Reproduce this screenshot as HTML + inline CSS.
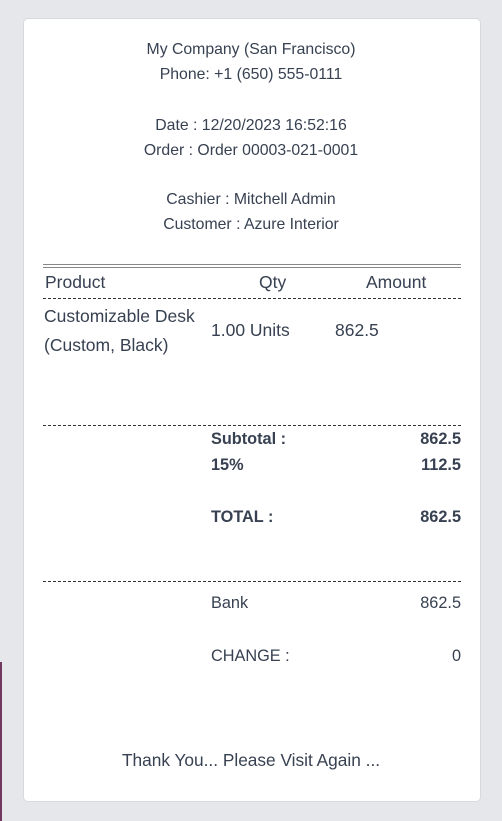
<!DOCTYPE html>
<html><head><style>
body{margin:0;width:502px;height:821px;background:#e6e7eb;position:relative;overflow:hidden;font-family:"Liberation Sans",sans-serif;color:#374151}
.card{position:absolute;left:23px;top:18px;width:456px;height:782px;background:#fff;border:1px solid #d8d9dd;border-radius:5px}
.strip{position:absolute;left:0;top:662px;width:2px;height:159px;background:#71395f}
.t{position:absolute;white-space:nowrap;line-height:1}
.c{left:0;width:502px;text-align:center;font-size:15.8px}
.s{font-size:17.5px}
.b{font-weight:bold;font-size:16.3px}
.r{text-align:right}
.dash{position:absolute;left:43px;width:418px;border-top:1px dashed #333}
</style></head><body>
<div class="strip"></div>
<div class="card"></div>
<div class="t c" style="top:42px">My Company (San Francisco)</div>
<div class="t c" style="top:67px">Phone: +1 (650) 555-0111</div>
<div class="t c" style="top:118px">Date : 12/20/2023 16:52:16</div>
<div class="t c" style="top:143px">Order : Order 00003-021-0001</div>
<div class="t c" style="top:192px">Cashier : Mitchell Admin</div>
<div class="t c" style="top:217px">Customer : Azure Interior</div>
<div style="position:absolute;left:43px;top:264px;width:418px;height:2px;border-top:1px solid #888;border-bottom:1px solid #888"></div>
<div class="t s" style="left:45px;top:274px">Product</div>
<div class="t s" style="left:259px;top:274px">Qty</div>
<div class="t s" style="left:366px;top:274px">Amount</div>
<div class="dash" style="top:298px"></div>
<div class="t s" style="left:44px;top:308px">Customizable Desk</div>
<div class="t s" style="left:44px;top:337px">(Custom, Black)</div>
<div class="t s" style="left:211px;top:322px">1.00 Units</div>
<div class="t s" style="left:335px;top:322px">862.5</div>
<div class="dash" style="top:425px"></div>
<div class="t b" style="left:211px;top:431px">Subtotal :</div>
<div class="t b r" style="right:41px;top:431px">862.5</div>
<div class="t b" style="left:211px;top:457px">15%</div>
<div class="t b r" style="right:41px;top:457px">112.5</div>
<div class="t b" style="left:211px;top:509px">TOTAL :</div>
<div class="t b r" style="right:41px;top:509px">862.5</div>
<div class="dash" style="top:581px"></div>
<div class="t" style="left:211px;top:595px;font-size:16.3px">Bank</div>
<div class="t r" style="right:41px;top:595px;font-size:16.3px">862.5</div>
<div class="t" style="left:211px;top:648px;font-size:16.3px">CHANGE :</div>
<div class="t r" style="right:41px;top:648px;font-size:16.3px">0</div>
<div class="t c" style="top:752px;font-size:17.3px">Thank You... Please Visit Again ...</div>
</body></html>
